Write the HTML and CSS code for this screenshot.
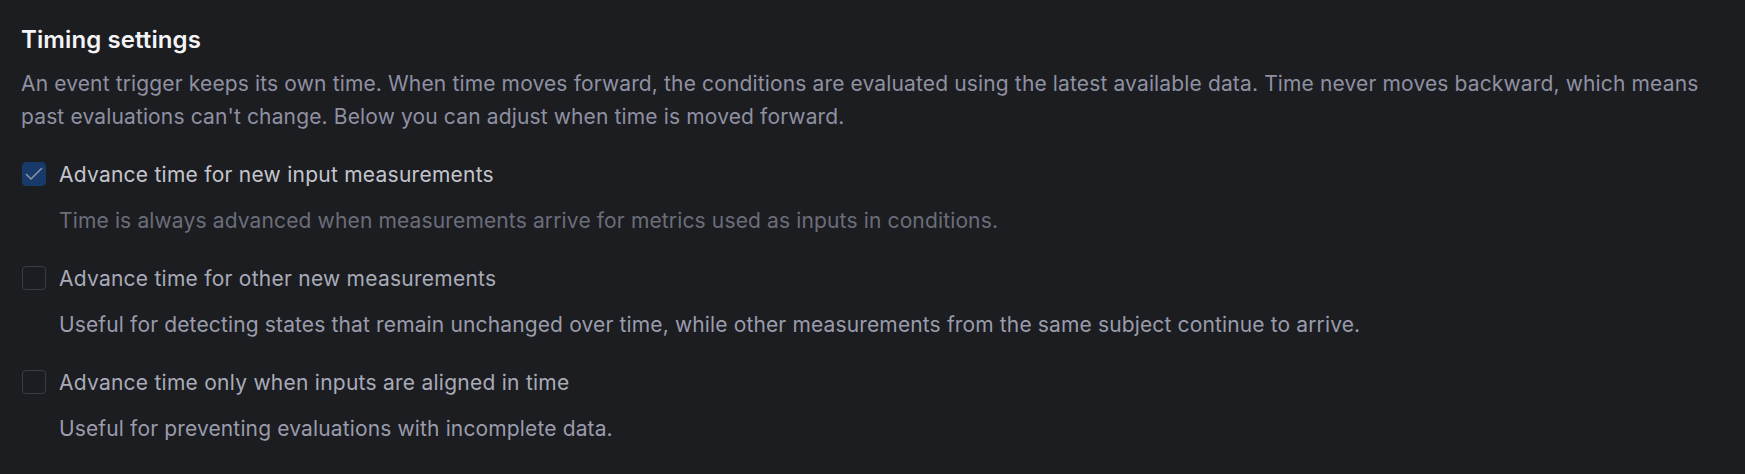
FILE: index.html
```html
<!DOCTYPE html>
<html lang="en">
<head>
    <meta charset="UTF-8">
    <meta name="viewport" content="width=device-width, initial-scale=1.0">
    <title>Timing settings</title>
    <link rel="stylesheet" href="styles.css">
</head>
<body>
    <div class="container">
        <h2 class="section-title">Timing settings</h2>
        <p class="section-desc">An event trigger keeps its own time. When time moves forward, the conditions are evaluated using the latest available data. Time never moves backward, which means past evaluations can't change. Below you can adjust when time is moved forward.</p>

        <div class="options">
            <div class="option disabled">
                <div class="option-row">
                    <span class="checkbox checked">
                        <svg viewBox="0 0 22 22" width="22" height="22"><path d="M3.5 11.5 L8 16 L18.5 5.5" fill="none" stroke="#8c95a5" stroke-width="1.5" stroke-linecap="round" stroke-linejoin="round"/></svg>
                    </span>
                    <label class="option-label">Advance time for new input measurements</label>
                </div>
                <div class="option-help">Time is always advanced when measurements arrive for metrics used as inputs in conditions.</div>
            </div>

            <div class="option">
                <div class="option-row">
                    <span class="checkbox"></span>
                    <label class="option-label">Advance time for other new measurements</label>
                </div>
                <div class="option-help">Useful for detecting states that remain unchanged over time, while other measurements from the same subject continue to arrive.</div>
            </div>

            <div class="option">
                <div class="option-row">
                    <span class="checkbox"></span>
                    <label class="option-label">Advance time only when inputs are aligned in time</label>
                </div>
                <div class="option-help">Useful for preventing evaluations with incomplete data.</div>
            </div>
        </div>
    </div>
</body>
</html>
```

FILE: styles.css
```css
* {
    margin: 0;
    padding: 0;
    box-sizing: border-box;
}

body {
    font-family: Inter, 'Noto Sans', sans-serif;
    background: #1c1d21;
    color: #8f91a1;
    overflow: hidden;
}

.container {
    padding: 25px 22px 0 21px;
}

.section-title {
    font-size: 24px;
    font-weight: 600;
    line-height: 30px;
    letter-spacing: 0.1px;
    color: #f4f4f6;
    margin-bottom: 12px;
}

.section-desc {
    font-size: 21px;
    line-height: 33px;
    letter-spacing: 0.14px;
    color: #8f91a1;
}

.options {
    display: flex;
    flex-direction: column;
    gap: 25px;
    margin-top: 25px;
}

.option {
    display: flex;
    flex-direction: column;
    gap: 13px;
}

.option-row {
    display: flex;
    align-items: flex-start;
    gap: 13px;
}

.checkbox {
    width: 24px;
    height: 24px;
    margin: 4px 0 0 1px;
    border: 1px solid #3a3d45;
    border-radius: 4px;
    flex-shrink: 0;
    display: flex;
    align-items: center;
    justify-content: center;
}

.checkbox.checked {
    background: #173a6b;
    border-color: #173a6b;
}

.checkbox svg {
    display: block;
}

.option-label {
    font-size: 21px;
    line-height: 33px;
    letter-spacing: 0.25px;
    color: #a9abb8;
}

.option-help {
    font-size: 21px;
    line-height: 33px;
    letter-spacing: 0.14px;
    color: #9a9cab;
    padding-left: 38px;
}

.option.disabled .option-label {
    color: #c4c5cc;
}

.option.disabled .option-help {
    color: #6b6d7a;
}
```
